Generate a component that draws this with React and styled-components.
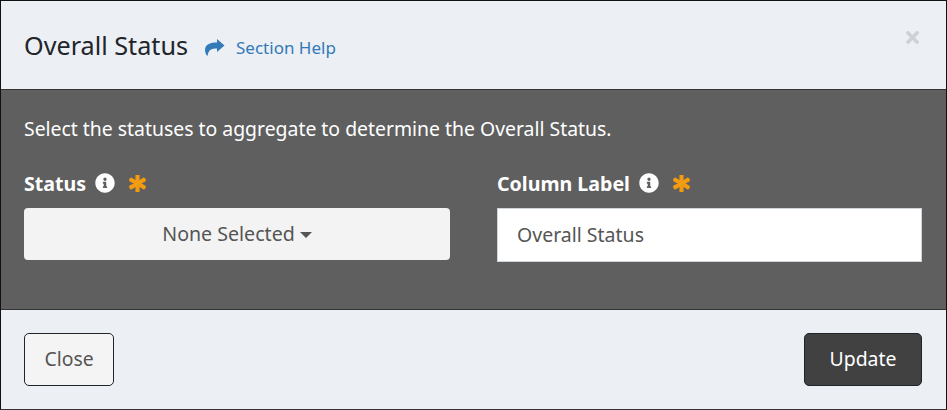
import React from "react";
import styled, { createGlobalStyle } from "styled-components";
import { FaInfoCircle, FaAsterisk, FaTimes } from "react-icons/fa";

const Global = createGlobalStyle`
  html, body { margin: 0; padding: 0; background: #3a3a3a; }
  * { box-sizing: border-box; }
`;

const Modal = styled.div`
  width: 947px;
  height: 410px;
  display: flex;
  flex-direction: column;
  border: 1px solid #111;
  border-bottom-color: #333;
  font-family: "Noto Sans", "Liberation Sans", sans-serif;
  background: #eceff4;
`;

const Header = styled.header`
  height: 89px;
  flex: none;
  display: flex;
  align-items: center;
  padding: 0 24px 0 23px;
  border-bottom: 1px solid #333;
`;

const Title = styled.h4`
  margin: 0;
  font-size: 25.2px;
  font-weight: 400;
  color: #212529;
`;

const HelpLink = styled.a`
  display: flex;
  align-items: center;
  gap: 11px;
  margin-left: 17px;
  margin-top: 4px;
  font-size: 17px;
  color: #337ab7;
`;

const CloseX = styled.span`
  margin-left: auto;
  margin-top: -15px;
  display: flex;
  color: #ced1d6;
  font-size: 19px;
`;

const Body = styled.section`
  flex: 1;
  background: #5f5f5f;
  padding: 27px 24px 0 23px;
  color: #fff;
`;

const Intro = styled.p`
  margin: 0 0 30px;
  font-size: 19.4px;
  line-height: 24px;
`;

const Fields = styled.div`
  display: grid;
  grid-template-columns: 426px 425px;
  column-gap: 47px;
`;

const Field = styled.div`
  display: flex;
  flex-direction: column;
`;

const Label = styled.label`
  display: flex;
  align-items: center;
  height: 24px;
  margin-bottom: 13px;
  font-size: 19.6px;
  font-weight: 700;
`;

const Info = styled(FaInfoCircle)`
  margin-left: 9px;
  font-size: 20px;
`;

const Required = styled(FaAsterisk)`
  margin-left: 14px;
  font-size: 17px;
  color: #f39c12;
  stroke: currentColor;
  stroke-width: 40;
`;

const SelectButton = styled.button`
  height: 52px;
  border: 0;
  border-radius: 4px;
  background: #f3f3f3;
  color: #555;
  font: inherit;
  font-size: 19.6px;
  display: flex;
  align-items: center;
  justify-content: center;
  gap: 5px;
  padding-bottom: 2px;
`;

const Caret = styled.span`
  width: 0;
  height: 0;
  margin-top: 3px;
  border-left: 6.5px solid transparent;
  border-right: 6.5px solid transparent;
  border-top: 6px solid #555;
`;

const TextInput = styled.input`
  height: 54px;
  width: 100%;
  border: 1px solid #ced4da;
  background: #fff;
  color: #555;
  padding: 0 19px 2px;
  font: inherit;
  font-size: 19.5px;
`;

const Footer = styled.footer`
  height: 100px;
  flex: none;
  display: flex;
  align-items: flex-start;
  justify-content: space-between;
  padding: 23px 24px 0 23px;
  border-top: 1px solid #333;
`;

const Button = styled.button`
  height: 53px;
  width: ${(p) => p.$width}px;
  border: 1px solid #212529;
  border-radius: 5px;
  background: ${(p) => (p.$dark ? "#414142" : "#f4f4f4")};
  color: ${(p) => (p.$dark ? "#fff" : "#555")};
  font: inherit;
  font-size: 19.4px;
  padding: 0 0 2px;
`;

const ShareIcon = () => (
  <svg width="20" height="17" viewBox="0 0 20 17" fill="currentColor">
    <path d="M12 0L19.5 6.5 12 13V9.5C7 9.5 3.5 10 2.5 17 1 16 0 13 0 11 0 5 6 3.5 12 3.5Z" />
  </svg>
);

export default function App() {
  return (
    <>
      <Global />
      <Modal>
        <Header>
          <Title>Overall Status</Title>
          <HelpLink>
            <ShareIcon />
            Section Help
          </HelpLink>
          <CloseX>
            <FaTimes />
          </CloseX>
        </Header>
        <Body>
          <Intro>Select the statuses to aggregate to determine the Overall Status.</Intro>
          <Fields>
            <Field>
              <Label>
                Status <Info /> <Required />
              </Label>
              <SelectButton>
                None Selected <Caret />
              </SelectButton>
            </Field>
            <Field>
              <Label>
                Column Label <Info /> <Required />
              </Label>
              <TextInput readOnly value="Overall Status" />
            </Field>
          </Fields>
        </Body>
        <Footer>
          <Button $width={90}>Close</Button>
          <Button $width={118} $dark>
            Update
          </Button>
        </Footer>
      </Modal>
    </>
  );
}
